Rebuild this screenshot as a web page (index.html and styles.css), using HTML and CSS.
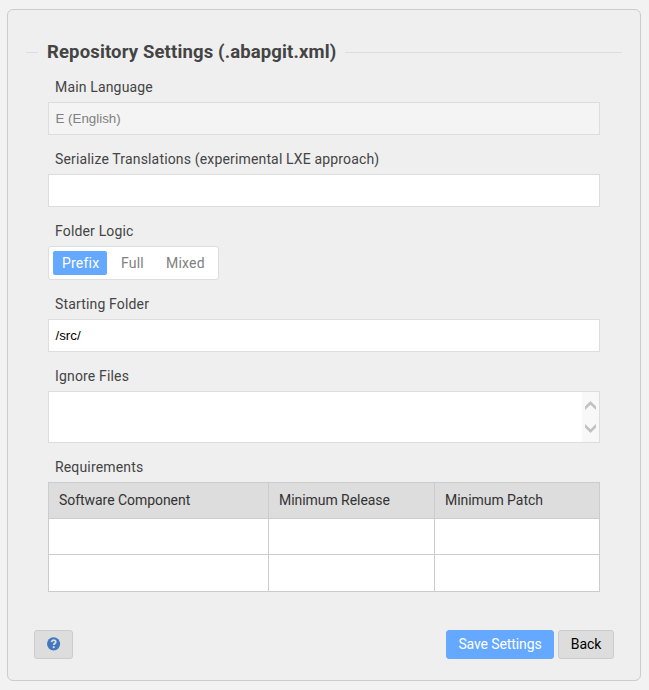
FILE: index.html
```html
<!DOCTYPE html>
<html lang="en">
<head>
<meta charset="utf-8">
<title>Repository Settings</title>
<link rel="stylesheet" href="styles.css">
</head>
<body>
<form class="dialog">
  <h1 class="legend"><span class="legend-text">Repository Settings (.abapgit.xml)</span></h1>
  <div class="fields">
    <div class="field">
      <label class="label">Main Language</label>
      <div class="input disabled">E (English)</div>
    </div>
    <div class="field">
      <label class="label">Serialize Translations (experimental LXE approach)</label>
      <div class="input"></div>
    </div>
    <div class="field">
      <label class="label">Folder Logic</label>
      <div class="radio">
        <span class="option selected">Prefix</span>
        <span class="option full">Full</span>
        <span class="option mixed">Mixed</span>
      </div>
    </div>
    <div class="field">
      <label class="label">Starting Folder</label>
      <div class="input">/src/</div>
    </div>
    <div class="field">
      <label class="label">Ignore Files</label>
      <div class="textarea">
        <div class="scrollbar">
          <svg width="11" height="9" viewBox="0 0 11 9"><path d="M0 5.5 5.5 0 11 5.5V9L5.5 3.8 0 9z"/></svg>
          <svg width="11" height="9" viewBox="0 0 11 9"><path d="M0 3.5 5.5 9 11 3.5V0L5.5 5.2 0 0z"/></svg>
        </div>
      </div>
    </div>
    <div class="field">
      <label class="label">Requirements</label>
      <div class="table">
        <div class="cell head">Software Component</div><div class="cell head">Minimum Release</div><div class="cell head">Minimum Patch</div>
        <div class="cell"></div><div class="cell"></div><div class="cell"></div>
        <div class="cell"></div><div class="cell"></div><div class="cell"></div>
      </div>
    </div>
  </div>
  <div class="actions">
    <div class="button help">
      <svg width="14" height="14" viewBox="0 0 14 14"><circle cx="6.6" cy="6.8" r="6.6" fill="#4078c0"/><path d="M4.5 5.1C4.8 3.6 5.6 3.2 6.6 3.2c1.2 0 2.1.7 2.1 1.8C8.7 6.5 6.7 6.4 6.7 8.1" fill="none" stroke="#ddd" stroke-width="1.8"/><circle cx="6.7" cy="10.2" r="1.1" fill="#ddd"/></svg>
    </div>
    <div class="button save">Save Settings</div>
    <div class="button back">Back</div>
  </div>
</form>
</body>
</html>
```
FILE: styles.css
```css
* {
  box-sizing: border-box;
}

body {
  margin: 0;
  padding: 9px 8px 9px 7px;
  background: #f2f2f2;
  color: #444;
  font: 400 14px/20px Roboto, sans-serif;
}

.dialog {
  height: 672px;
  padding: 30px 18px 0;
  border: 1px solid #ccc;
  border-radius: 6px;
  background: #efefef;
}

.legend {
  display: flex;
  align-items: center;
  gap: 9px;
  height: 24px;
  margin: 0;
  font-size: 18.5px;
  font-weight: 700;
  line-height: 24px;
  white-space: nowrap;
}

.legend::before,
.legend::after {
  content: "";
  height: 1px;
  background: #ddd;
}

.legend::before {
  width: 12px;
}

.legend::after {
  flex: 1;
}

.legend-text {
  width: 289px;
  letter-spacing: 0.14px;
}

.fields {
  display: flex;
  flex-direction: column;
  gap: 14px;
  width: 552px;
  margin: 13px 0 0 22px;
}

.label {
  display: block;
  height: 25px;
  padding-left: 7px;
  line-height: 21px;
  letter-spacing: 0.16px;
}

.input {
  height: 33px;
  padding-left: 6.5px;
  border: 1px solid #ddd;
  background: #fff;
  color: #000;
  font: 13.33px/31px "Liberation Sans", sans-serif;
}

.disabled {
  background: #f4f4f4;
  color: #808080;
}

.radio {
  display: flex;
  width: 171px;
  height: 34px;
  padding: 4px;
  border: 1px solid #ddd;
  border-radius: 3px;
  background: #fff;
}

.option {
  height: 24px;
  padding-left: 9px;
  border-radius: 2px;
  color: #808080;
  line-height: 25px;
  letter-spacing: 0.2px;
}

.selected {
  width: 54px;
  background: #64a8ff;
  color: #fff;
}

.full {
  width: 50px;
  padding-left: 14px;
}

.textarea {
  display: flex;
  justify-content: flex-end;
  height: 52px;
  border: 1px solid #ddd;
  background: #fff;
}

.scrollbar {
  display: flex;
  flex-direction: column;
  align-items: center;
  justify-content: space-between;
  width: 17px;
  padding: 9px 0;
  background: #f8f8f8;
  fill: #c1c1c1;
}

.table {
  display: grid;
  grid-template-columns: 219px 165px 164px;
  grid-template-rows: 35px 35px 36px;
  gap: 1px;
  padding: 1px;
  background: #ccc;
}

.cell {
  padding-left: 10px;
  background: #fff;
}

.head {
  background: #ddd;
  color: #333;
  line-height: 35px;
  letter-spacing: -0.05px;
}

.actions {
  display: flex;
  gap: 4px;
  margin: 38px 8px 0;
}

.button {
  display: flex;
  align-items: center;
  justify-content: center;
  height: 29px;
  padding-bottom: 2px;
  border: 1px solid #ccc;
  border-radius: 3px;
  background: #ddd;
  color: #000;
  letter-spacing: -0.1px;
}

.help {
  width: 39px;
  margin-right: auto;
}

.save {
  width: 108px;
  border-color: #64a8ff;
  background: #64a8ff;
  color: #fff;
}

.back {
  width: 56px;
}
```
